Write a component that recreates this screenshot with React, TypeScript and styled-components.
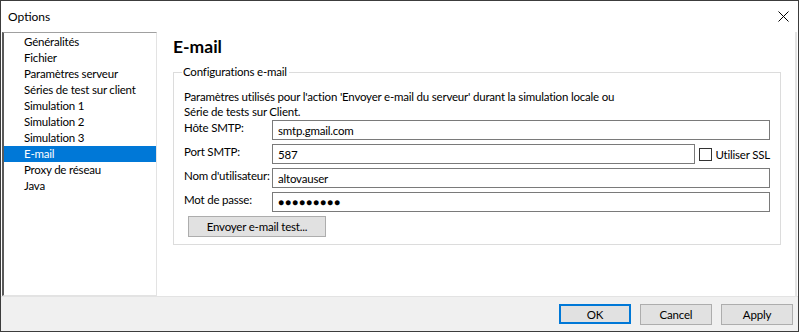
import React from "react";
import styled, { createGlobalStyle } from "styled-components";

const GlobalStyle = createGlobalStyle`
  html, body {
    margin: 0;
    padding: 0;
    background: #ffffff;
  }
  * {
    box-sizing: border-box;
  }
`;

const UI_FONT = `Lato, "Liberation Sans", Arial, sans-serif`;

const Window = styled.div`
  width: 799px;
  height: 332px;
  border: 1px solid #3c3c3c;
  display: flex;
  flex-direction: column;
  font-family: ${UI_FONT};
  font-size: 11.5px;
  letter-spacing: -0.2px;
  color: #000000;
  background: #ffffff;
  overflow: hidden;
`;

const TitleBar = styled.div`
  height: 31px;
  flex: none;
  display: flex;
  align-items: center;
  justify-content: space-between;
  padding: 0 9px 0 7px;
  font-size: 12px;
  letter-spacing: 0;
`;

const CloseButton = styled.div`
  width: 12px;
  height: 12px;
  display: flex;
  align-items: center;
  justify-content: center;
`;

const Body = styled.div`
  flex: 1;
  display: flex;
  min-height: 0;
  padding-left: 1px;
  border-bottom: 1px solid #e3e3e3;
`;

const TreeList = styled.ul`
  width: 155px;
  flex: none;
  margin: 0;
  padding: 1px 0 0 0;
  list-style: none;
  border-top: 1px solid #a0a0a0;
  border-left: 2px solid #5a5a5a;
  border-right: 1px solid #e3e3e3;
  border-bottom: 1px solid #e3e3e3;
`;

const TreeItem = styled.li<{ $selected?: boolean }>`
  height: 16px;
  line-height: 16px;
  padding-left: 20px;
  white-space: nowrap;
  background: ${(p) => (p.$selected ? "#0078d7" : "transparent")};
  color: ${(p) => (p.$selected ? "#ffffff" : "#000000")};
`;

const Panel = styled.div`
  flex: 1;
  display: flex;
  flex-direction: column;
  padding: 2px 13px 0 16px;
  border-right: 2px solid #e3e3e3;
  margin-right: 1px;
`;

const Heading = styled.h1`
  margin: 0;
  font-size: 17.5px;
  font-weight: bold;
  letter-spacing: 0;
  line-height: 24px;
  height: 28px;
  padding-top: 1px;
`;

const GroupBox = styled.fieldset`
  margin: 3px 0 0 0;
  width: 608px;
  padding: 10px 10px 7px 10px;
  border: 1px solid #dcdcdc;
`;

const Legend = styled.legend`
  padding: 0 2px 0 1px;
  margin-left: -2px;
  line-height: 14px;
`;

const Description = styled.p`
  margin: 0 0 1px 0;
  line-height: 15px;
`;

const FormGrid = styled.div`
  display: grid;
  grid-template-columns: 88px 1fr;
  row-gap: 4px;
  align-items: center;
`;

const FieldLabel = styled.label`
  line-height: 20px;
  white-space: nowrap;
  align-self: start;
  margin-top: -2px;
`;

const TextBox = styled.input`
  height: 20px;
  width: 100%;
  border: 1px solid #7a7a7a;
  padding: 0 5px;
  font-family: ${UI_FONT};
  font-size: 11.5px;
  letter-spacing: -0.2px;
  color: #000000;
  background: #ffffff;
  outline: none;
`;

const PasswordBox = styled(TextBox)`
  font-size: 10px;
  letter-spacing: 1px;
`;

const InlineRow = styled.div`
  display: flex;
  align-items: center;
  gap: 4px;
`;

const CheckBox = styled.span`
  width: 13px;
  height: 13px;
  flex: none;
  border: 1px solid #333333;
  background: #ffffff;
`;

const CheckLabel = styled.span`
  white-space: nowrap;
  margin-left: -1px;
`;

const Button = styled.button<{ $default?: boolean; $width?: number }>`
  width: ${(p) => p.$width ?? 72}px;
  height: ${(p) => (p.$default ? 20 : 21)}px;
  background: #e1e1e1;
  border: ${(p) => (p.$default ? "2px solid #0078d7" : "1px solid #adadad")};
  font-family: ${UI_FONT};
  font-size: 11.5px;
  letter-spacing: -0.2px;
  color: #000000;
  padding: 0;
`;

const TestButtonRow = styled.div`
  padding-top: 4px;
  padding-left: 4px;
`;

const Footer = styled.div`
  height: 34px;
  flex: none;
  background: #f0f0f0;
  display: flex;
  justify-content: flex-end;
  align-items: flex-start;
  gap: 9px;
  padding: 7px 5px 0 0;
`;

const treeItems = [
  "Généralités",
  "Fichier",
  "Paramètres serveur",
  "Séries de test sur client",
  "Simulation 1",
  "Simulation 2",
  "Simulation 3",
  "E-mail",
  "Proxy de réseau",
  "Java",
];

export default function App() {
  return (
    <>
      <GlobalStyle />
      <Window>
        <TitleBar>
          <span>Options</span>
          <CloseButton>
            <svg width="11" height="11" viewBox="0 0 11 11">
              <path d="M0.5 0.5 L10.5 10.5 M10.5 0.5 L0.5 10.5" stroke="#000" strokeWidth="1" />
            </svg>
          </CloseButton>
        </TitleBar>
        <Body>
          <TreeList>
            {treeItems.map((item) => (
              <TreeItem key={item} $selected={item === "E-mail"}>
                {item}
              </TreeItem>
            ))}
          </TreeList>
          <Panel>
            <Heading>E-mail</Heading>
            <GroupBox>
              <Legend>Configurations e-mail</Legend>
              <Description>
                Paramètres utilisés pour l'action 'Envoyer e-mail du serveur' durant la simulation locale ou
                <br />
                Série de tests sur Client.
              </Description>
              <FormGrid>
                <FieldLabel>Hôte SMTP:</FieldLabel>
                <TextBox readOnly value="smtp.gmail.com" />
                <FieldLabel>Port SMTP:</FieldLabel>
                <InlineRow>
                  <TextBox readOnly value="587" />
                  <CheckBox />
                  <CheckLabel>Utiliser SSL</CheckLabel>
                </InlineRow>
                <FieldLabel>Nom d'utilisateur:</FieldLabel>
                <TextBox readOnly value="altovauser" />
                <FieldLabel>Mot de passe:</FieldLabel>
                <PasswordBox readOnly value="●●●●●●●●●" />
              </FormGrid>
              <TestButtonRow>
                <Button $width={138}>Envoyer e-mail test...</Button>
              </TestButtonRow>
            </GroupBox>
          </Panel>
        </Body>
        <Footer>
          <Button $default>OK</Button>
          <Button>Cancel</Button>
          <Button>Apply</Button>
        </Footer>
      </Window>
    </>
  );
}
